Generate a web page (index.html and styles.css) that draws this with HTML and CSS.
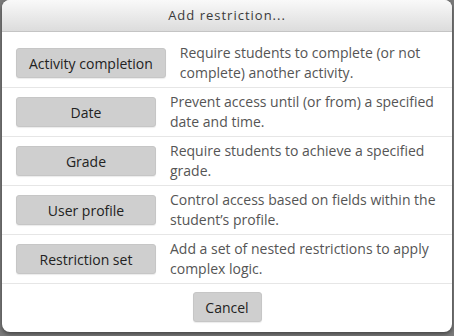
FILE: index.html
```html
<!DOCTYPE html>
<html lang="en">
<head>
  <meta charset="UTF-8">
  <title>Add restriction</title>
  <link rel="stylesheet" href="styles.css">
</head>
<body>
  <!-- Restriction dialog -->
  <div class="dialog">
    <div class="dialog-header">Add restriction...</div>

    <div class="dialog-body">
      <div class="option-row">
        <button class="btn">Activity completion</button>
        <p class="option-text">Require students to complete (or not complete) another activity.</p>
      </div>
      <div class="option-row">
        <button class="btn">Date</button>
        <p class="option-text">Prevent access until (or from) a specified date and time.</p>
      </div>
      <div class="option-row">
        <button class="btn">Grade</button>
        <p class="option-text">Require students to achieve a specified grade.</p>
      </div>
      <div class="option-row">
        <button class="btn">User profile</button>
        <p class="option-text">Control access based on fields within the student’s profile.</p>
      </div>
      <div class="option-row">
        <button class="btn">Restriction set</button>
        <p class="option-text">Add a set of nested restrictions to apply complex logic.</p>
      </div>
    </div>

    <div class="dialog-footer">
      <button class="btn btn-cancel">Cancel</button>
    </div>
  </div>
</body>
</html>
```

FILE: styles.css
```css
* {
  margin: 0;
  padding: 0;
  box-sizing: border-box;
}

body {
  font-family: 'Open Sans', 'Liberation Sans', sans-serif;
  background: #7a7a7a;
  padding: 0 2px;
  height: 336px;
  overflow: hidden;
}

/* Dialog */
.dialog {
  width: 450px;
  background: #fff;
  border-radius: 8px;
  overflow: hidden;
  box-shadow: 0 2px 4px rgba(0, 0, 0, 0.45);
}

.dialog-header {
  height: 32px;
  line-height: 31px;
  text-align: center;
  font-size: 13px;
  letter-spacing: 1px;
  color: #3a3a3a;
  background: linear-gradient(to bottom, #f9f9f9, #dcdcdc);
  border-bottom: 1px solid #c4c4c4;
}

.dialog-body {
  padding-top: 7px;
}

.option-row {
  display: flex;
  align-items: center;
  gap: 14px;
  padding: 4px 10px 4px 14px;
  min-height: 49px;
  border-bottom: 1px solid #e6e6e6;
}

.option-text {
  flex: 1;
  font-size: 14px;
  line-height: 20px;
  color: #555;
}

.btn {
  flex-shrink: 0;
  min-width: 140px;
  height: 30px;
  padding: 0 12px;
  font-family: inherit;
  font-size: 14px;
  color: #222;
  background: #cfcfcf;
  border: 1px solid #c6c6c6;
  border-radius: 3px;
  box-shadow: 0 1px 1px rgba(0, 0, 0, 0.08);
  cursor: pointer;
}

.dialog-footer {
  display: flex;
  justify-content: center;
  padding: 8px 0 10px;
}

.btn-cancel {
  min-width: 0;
  width: 69px;
  padding: 0;
}
```
